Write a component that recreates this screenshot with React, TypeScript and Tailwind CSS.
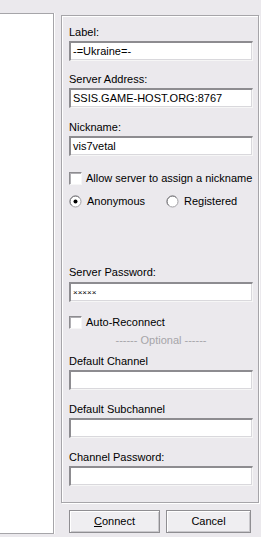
import React from "react"

const font = { fontFamily: '"Liberation Sans", Arial, sans-serif' }

const Label = ({ text, className = "" }: { text: string; className?: string }) => (
  <div className={`h-[13px] leading-[13px] text-[11px] text-black whitespace-nowrap ${className}`}>{text}</div>
)

const Input = ({ value = "", className = "", small = false }: { value?: string; className?: string; small?: boolean }) => (
  <div
    className={`h-[20px] w-[184px] bg-white border-t-2 border-l-2 border-b border-r border-t-[#8d8c90] border-l-[#8d8c90] border-b-[#f6f6f6] border-r-[#f6f6f6] shadow-[inset_-1px_-1px_0_#d9d8dc] flex items-center pl-[2px] text-black whitespace-nowrap overflow-hidden ${small ? "text-[8px] tracking-[0px]" : "text-[11px]"} ${className}`}
  >
    {value}
  </div>
)

const Check = () => (
  <div className="w-[13px] h-[13px] bg-white border-t border-l border-[#8d8c90] border-b-[#f6f6f6] border-r-[#f6f6f6] border-b border-r shadow-[inset_1px_1px_0_#b0afb3]" />
)

const Radio = ({ on = false }: { on?: boolean }) => (
  <svg width="13" height="13" viewBox="0 0 13 13">
    <circle cx="6.5" cy="6.5" r="5.5" fill="#fff" stroke="#a09fa3" />
    <path d="M2.6 10.4 A5.5 5.5 0 0 1 10.4 2.6" fill="none" stroke="#7a797d" />
    {on && <circle cx="6.5" cy="6.5" r="2" fill="#000" />}
  </svg>
)

export default function App() {
  return (
    <div className="w-[261px] h-[537px] bg-[#ebe9ed] flex items-start overflow-hidden" style={font}>
      {/* left list panel */}
      <div className="mt-[13px] w-[54px] h-[521px] bg-white border-t border-b border-r border-[#a6a5a9] shadow-[1px_0_0_#fff]" />

      <div className="ml-[7px] mt-[15px] flex flex-col">
        {/* group box */}
        <div className="w-[198px] h-[488px] border border-[#a6a5a9] shadow-[inset_1px_1px_0_#fff,1px_1px_0_#fff] pl-[7px] pt-[10px] flex flex-col text-[11px]">
          <Label text="Label:" />
          <Input value="-=Ukraine=-" className="mt-[2px]" />

          <Label text="Server Address:" className="mt-[12px]" />
          <Input value="SSIS.GAME-HOST.ORG:8767" className="mt-[2px]" />

          <Label text="Nickname:" className="mt-[13px]" />
          <Input value="vis7vetal" className="mt-[2px]" />

          <div className="mt-[16px] h-[13px] flex items-center gap-[4px]">
            <Check />
            <span className="leading-[13px]">Allow server to assign a nickname</span>
          </div>

          <div className="mt-[10px] h-[13px] flex items-center">
            <Radio on />
            <span className="ml-[5px] leading-[13px] w-[79px]">Anonymous</span>
            <Radio />
            <span className="ml-[5px] leading-[13px]">Registered</span>
          </div>

          <Label text="Server Password:" className="mt-[58px]" />
          <Input value="×××××" small className="mt-[3px]" />

          <div className="mt-[14px] h-[13px] flex items-center gap-[4px]">
            <Check />
            <span className="leading-[13px]">Auto-Reconnect</span>
          </div>

          <div className="mt-[5px] h-[13px] leading-[13px] w-[184px] text-center text-[#a6a5a9] whitespace-pre">
            ------ Optional ------
          </div>

          <Label text="Default Channel" className="mt-[8px]" />
          <Input className="mt-[2px]" />

          <Label text="Default Subchannel" className="mt-[13px]" />
          <Input className="mt-[2px]" />

          <Label text="Channel Password:" className="mt-[13px]" />
          <Input className="mt-[2px]" />
        </div>

        {/* buttons */}
        <div className="mt-[7px] ml-[8px] flex gap-[6px]">
          <button className="w-[91px] h-[23px] bg-[#efeef1] border border-[#8f8e92] shadow-[inset_1px_1px_0_#fff,inset_-1px_-1px_0_#c9c8cc] text-[11px] text-black">
            <span className="underline">C</span>onnect
          </button>
          <button className="w-[85px] h-[23px] bg-[#efeef1] border border-[#8f8e92] shadow-[inset_1px_1px_0_#fff,inset_-1px_-1px_0_#c9c8cc] text-[11px] text-black">
            Cancel
          </button>
        </div>
      </div>
    </div>
  )
}
